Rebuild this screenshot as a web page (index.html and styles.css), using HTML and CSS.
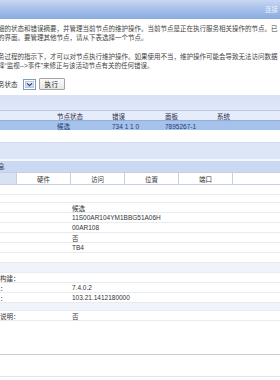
FILE: index.html
```html
<!DOCTYPE html>
<html lang="zh-CN">
<head>
<meta charset="utf-8">
<link rel="stylesheet" href="styles.css">
</head>
<body>
<div class="page">
  <div class="topbar"><span class="topbar-link">连接</span></div>
  <div class="intro">
    <p class="para">细的状态和错误摘要，并管理当前节点的维护操作。当前节点是正在执行服务相关操作的节点。已<br>的界面。要管理其他节点，请从下表选择一个节点。</p>
    <p class="para">务过程的指示下，才可以对节点执行维护操作。如果使用不当，维护操作可能会导致无法访问数据<br>择“监视--&gt;事件”来修正与该活动节点有关的任何错误。</p>
    <div class="action-row">
      <span class="action-label">务状态</span>
      <span class="select"><span class="select-arrow"><svg width="7" height="5" viewBox="0 0 7 5"><path d="M1 1.2 L3.5 3.6 L6 1.2" fill="none" stroke="#3a4a66" stroke-width="1.2"/></svg></span></span>
      <span class="btn">执行</span>
    </div>
  </div>
  <div class="band"></div>
  <div class="node-grid node-head">
    <span></span><span>节点状态</span><span>错误</span><span>面板</span><span>系统</span>
  </div>
  <div class="node-grid node-sel">
    <span></span><span>候选</span><span>734 1 1 0</span><span>7895267-1</span><span></span>
  </div>
  <div class="node-gap"></div>
  <div class="band2"></div>
  <div class="section-title">息</div>
  <div class="tabs">
    <span class="tab-first"></span><span class="tab">硬件</span><span class="tab">访问</span><span class="tab">位置</span><span class="tab">端口</span><span class="tab tab-last"></span>
  </div>
  <div class="rows">
    <div class="row"><span class="lbl"></span><span class="val"></span></div>
    <div class="row row-short"><span class="lbl"></span><span class="val"></span></div>
    <div class="row"><span class="lbl"></span><span class="val">候选</span></div>
    <div class="row"><span class="lbl"></span><span class="val">11S00AR104YM1BBG51A06H</span></div>
    <div class="row"><span class="lbl"></span><span class="val">00AR108</span></div>
    <div class="row"><span class="lbl"></span><span class="val">否</span></div>
    <div class="row"><span class="lbl"></span><span class="val">TB4</span></div>
    <div class="row"><span class="lbl"></span><span class="val"></span></div>
    <div class="row row-tint"><span class="lbl"></span><span class="val"></span></div>
    <div class="row"><span class="lbl">构建：</span><span class="val"></span></div>
    <div class="row"><span class="lbl">：</span><span class="val">7.4.0.2</span></div>
    <div class="row"><span class="lbl">：</span><span class="val">103.21.1412180000</span></div>
    <div class="row row-tint row-short"><span class="lbl"></span><span class="val"></span></div>
    <div class="row"><span class="lbl">说明：</span><span class="val">否</span></div>
  </div>
  <div class="blank1"></div>
  <div class="blank2"></div>
</div>
</body>
</html>
```
FILE: styles.css
```css
html, body {
  margin: 0;
  padding: 0;
  background: #ffffff;
}
body {
  width: 280px;
  height: 380px;
  overflow: hidden;
  font-family: "Liberation Sans", "Noto Sans CJK SC", sans-serif;
  font-size: 6.5px;
  color: #3a3a3a;
}
.page {
  width: 280px;
}
.topbar {
  height: 19px;
  background: linear-gradient(180deg, #c9d8f2 0%, #a8c1ea 45%, #89abe1 100%);
  border-bottom: 1px solid #ffffff;
  display: flex;
  justify-content: flex-end;
  align-items: center;
  padding-right: 2px;
}
.topbar-link {
  color: #eef3fb;
  font-size: 6.5px;
  margin-top: -1px;
}
.intro {
  padding: 4px 0 0 0;
  margin-left: -2px;
}
.para {
  margin: 0 0 10px 0;
  line-height: 9px;
  white-space: nowrap;
  color: #444444;
}
.action-row {
  display: flex;
  align-items: center;
  gap: 3px;
  height: 12px;
  margin-top: -2px;
}
.action-label {
  color: #333333;
}
.select {
  width: 11px;
  height: 9px;
  border: 1px solid #7f9db9;
  background: #ffffff;
  display: flex;
  align-items: center;
  justify-content: flex-end;
  margin-left: 2px;
}
.select-arrow {
  width: 9px;
  height: 7px;
  background: linear-gradient(180deg, #eef3fc, #c7d6f0);
  border: 1px solid #b6c7e6;
  display: flex;
  align-items: center;
  justify-content: center;
  box-sizing: border-box;
  margin-right: 1px;
}
.btn {
  height: 10px;
  padding: 0 5px;
  border: 1px solid #a6a6a6;
  border-radius: 1px;
  background: linear-gradient(180deg, #fbfbfb, #e6e6e6);
  display: flex;
  align-items: center;
  color: #222222;
  letter-spacing: 0.5px;
}
.band {
  margin-top: 5px;
  height: 15px;
  background: linear-gradient(180deg, #d9e3f7, #dfe7f8);
}
.node-grid {
  display: grid;
  grid-template-columns: 55px 55px 53px 52px 1fr;
  height: 10px;
  align-items: center;
}
.node-grid span {
  padding-left: 2px;
  white-space: nowrap;
}
.node-head {
  background: #e6ecf9;
  border-top: 1px solid #b9c9e6;
  height: 9px;
  color: #1f2d4a;
}
.node-sel {
  background: #a7c2ea;
  border-top: 1px solid #8eaedf;
  height: 9px;
  color: #1d3a78;
}
.node-gap {
  height: 12px;
  border-bottom: 1px solid #d2dbee;
}
.band2 {
  height: 16px;
  background: #dde6f7;
  border-bottom: 2px solid #f4f7fd;
}
.section-title {
  height: 11px;
  line-height: 11px;
  background: #cbd8f1;
  color: #1f2d4a;
  padding-left: 0;
  margin-left: -2px;
}
.tabs {
  display: flex;
  height: 11px;
  border-top: 1px solid #c5cfdf;
  border-bottom: 1px solid #c5cfdf;
  background: #ffffff;
}
.tab-first {
  width: 16px;
  background: #d7e2f5;
}
.tab {
  width: 53px;
  border-left: 1px solid #c5cfdf;
  display: flex;
  align-items: center;
  justify-content: center;
  color: #333333;
}
.tab-last {
  flex: 1;
}
.rows {
  display: flex;
  flex-direction: column;
}
.row {
  display: flex;
  height: 9px;
  align-items: center;
  border-bottom: 1px solid #e8ebf0;
}
.row-short {
  height: 7px;
}
.row-tint {
  background: #f0f3fa;
}
.lbl {
  width: 72px;
  white-space: nowrap;
  color: #333333;
}
.val {
  white-space: nowrap;
  color: #333333;
}
.blank1 {
  height: 33px;
  border-bottom: 1px solid #cfcfcf;
}
.blank2 {
  height: 21px;
  border-bottom: 1px solid #e6e6e6;
}
```
